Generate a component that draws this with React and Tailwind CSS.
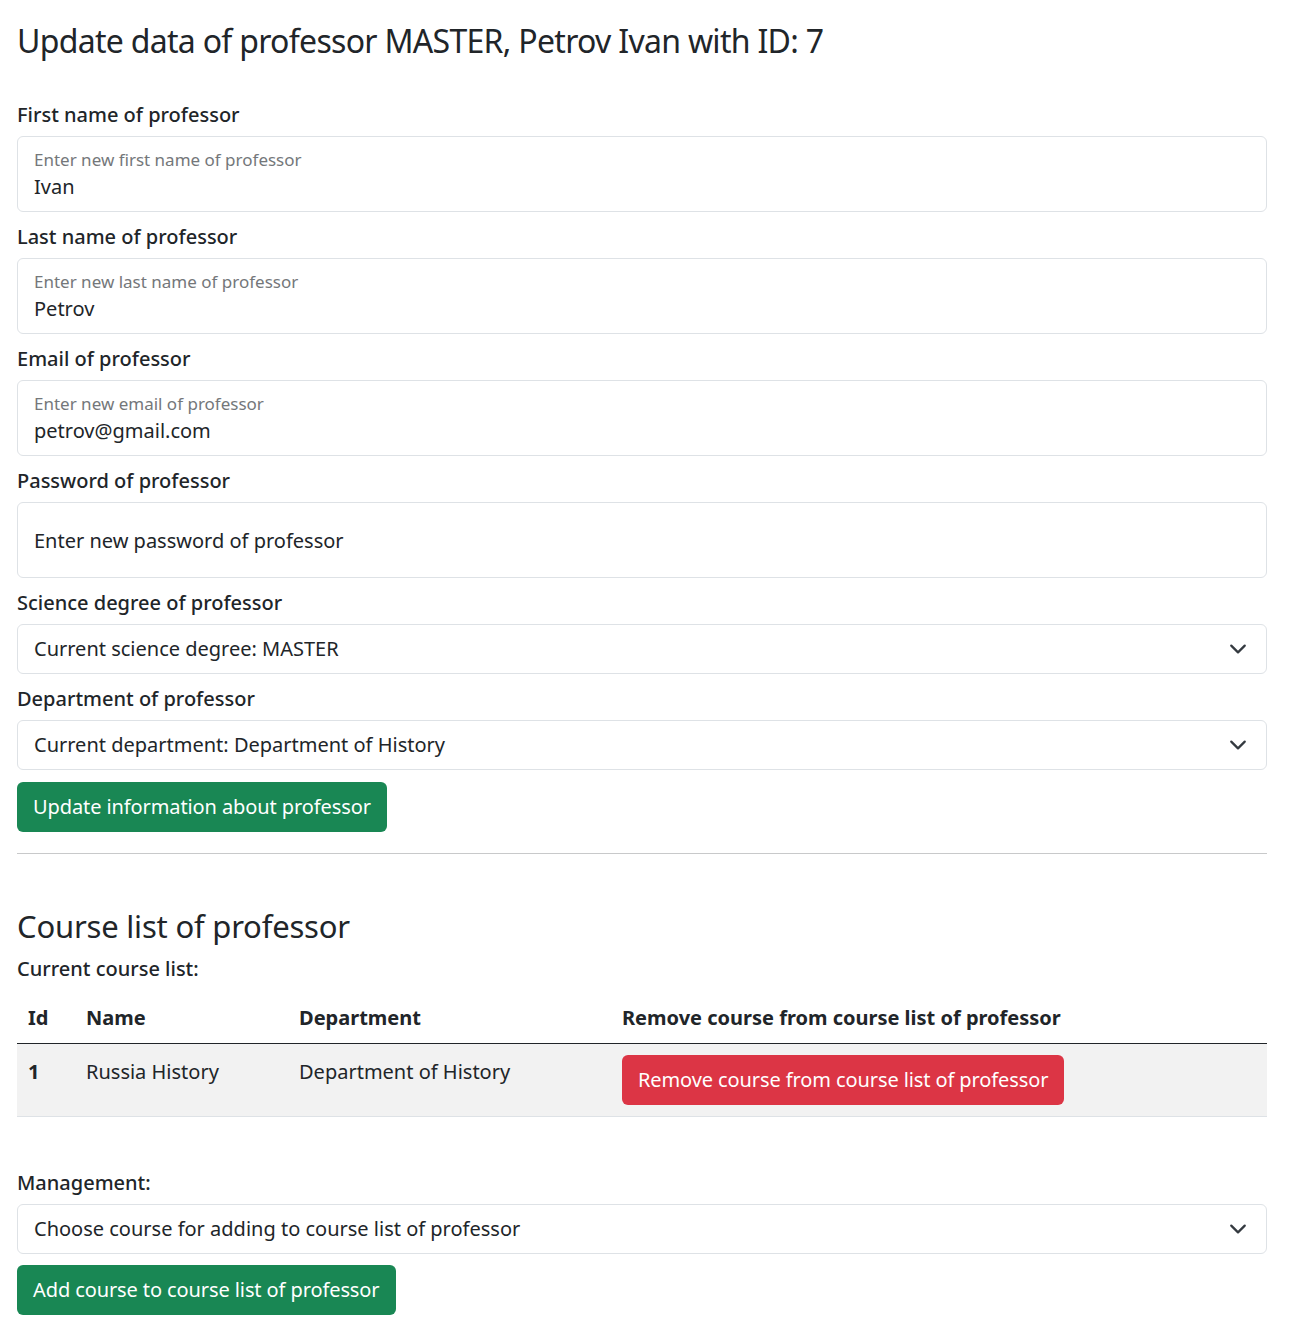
import React from "react";

const font = { fontFamily: '"Noto Sans", "Open Sans", sans-serif' };

function Chevron() {
  return (
    <svg width="18" height="18" viewBox="0 0 16 16" fill="none" className="shrink-0 mr-[1px]">
      <path d="m2 5 6 6 6-6" stroke="#343a40" strokeWidth="2" strokeLinecap="round" strokeLinejoin="round" />
    </svg>
  );
}

function Label({ children, first }) {
  return (
    <div className={`${first ? "mt-[35px]" : "mt-[10px]"} mb-[6px] h-[30px] leading-[30px] text-[20px] font-medium text-[#212529]`}>
      {children}
    </div>
  );
}

function FloatingInput({ small, value }) {
  return (
    <div className="h-[76px] border border-[#dee2e6] rounded-[6px] bg-white px-[16px] flex flex-col">
      <div className="mt-[11px] h-[24px] leading-[24px] text-[17px] text-[#74777a]">{small}</div>
      <div className="mt-[1px] h-[28px] leading-[28px] text-[20px] text-[#212529]">{value}</div>
    </div>
  );
}

function SelectBox({ children }) {
  return (
    <div className="h-[50px] border border-[#dee2e6] rounded-[6px] bg-white pl-[16px] pr-[18px] flex items-center justify-between">
      <span className="text-[20px] text-[#212529]">{children}</span>
      <Chevron />
    </div>
  );
}

function Button({ color, children }) {
  return (
    <div className={`inline-flex h-[50px] items-center px-[16px] rounded-[6px] text-white text-[20px] tracking-[-0.1px] ${color}`}>
      {children}
    </div>
  );
}

export default function App() {
  return (
    <div className="bg-white min-h-[1324px] w-[1294px]" style={font}>
      <div className="ml-[17px] w-[1250px] pt-[17px] pb-[9px]">
        <h2 className="text-[32px] leading-[48px] font-normal tracking-[-0.7px] text-[#212529]">
          Update data of professor MASTER, Petrov Ivan with ID: 7
        </h2>

        <Label first>First name of professor</Label>
        <FloatingInput small="Enter new first name of professor" value="Ivan" />

        <Label>Last name of professor</Label>
        <FloatingInput small="Enter new last name of professor" value="Petrov" />

        <Label>Email of professor</Label>
        <FloatingInput small="Enter new email of professor" value="petrov@gmail.com" />

        <Label>Password of professor</Label>
        <div className="h-[76px] border border-[#dee2e6] rounded-[6px] bg-white px-[16px] flex items-center">
          <span className="text-[20px] text-[#212529] mt-[2px]">Enter new password of professor</span>
        </div>

        <Label>Science degree of professor</Label>
        <SelectBox>Current science degree: MASTER</SelectBox>

        <Label>Department of professor</Label>
        <SelectBox>Current department: Department of History</SelectBox>

        <div className="mt-[12px]">
          <Button color="bg-[#198754]">Update information about professor</Button>
        </div>

        <div className="mt-[21px] h-px bg-[#c8c9ca]" />

        <h3 className="mt-[51px] text-[31px] leading-[43px] font-normal tracking-[-0.2px] text-[#212529]">
          Course list of professor
        </h3>
        <div className="mt-[5px] h-[31px] leading-[31px] text-[20px] font-medium text-[#212529]">
          Current course list:
        </div>

        <div className="mt-[9px] text-[20px] text-[#212529]">
          <div className="flex h-[51px] items-center border-b border-[#212529] font-bold">
            <div className="w-[58px] pl-[11px]">Id</div>
            <div className="w-[213px] pl-[11px]">Name</div>
            <div className="w-[323px] pl-[11px]">Department</div>
            <div className="flex-1 pl-[11px]">Remove course from course list of professor</div>
          </div>
          <div className="flex h-[73px] items-start bg-[#f2f2f2] border-b border-[#dee2e6] pt-[11px]">
            <div className="w-[58px] pl-[11px] leading-[34px] font-bold">1</div>
            <div className="w-[213px] pl-[11px] leading-[34px]">Russia History</div>
            <div className="w-[323px] pl-[11px] leading-[34px]">Department of History</div>
            <div className="flex-1 pl-[11px]">
              <Button color="bg-[#dc3545]">Remove course from course list of professor</Button>
            </div>
          </div>
        </div>

        <div className="mt-[50px] mb-[6px] h-[31px] leading-[31px] text-[20px] font-medium text-[#212529]">
          Management:
        </div>
        <SelectBox>Choose course for adding to course list of professor</SelectBox>
        <div className="mt-[11px]">
          <Button color="bg-[#198754]">Add course to course list of professor</Button>
        </div>
      </div>
    </div>
  );
}
